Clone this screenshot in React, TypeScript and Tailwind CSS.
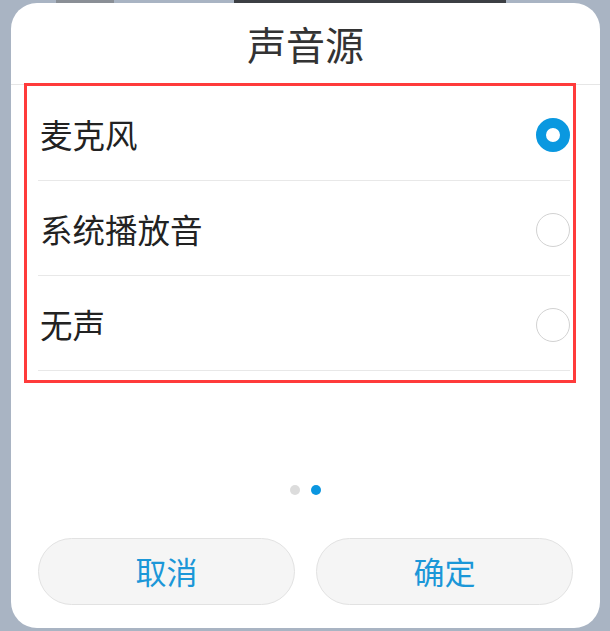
const options = [
  { label: "麦克风", checked: true },
  { label: "系统播放音", checked: false },
  { label: "无声", checked: false },
]

function Radio({ checked }: { checked: boolean }) {
  if (checked) {
    return <div className="w-[34px] h-[34px] rounded-full border-[10px] border-[#0a98e0] bg-white shrink-0" />
  }
  return <div className="w-[34px] h-[34px] rounded-full border-[1.5px] border-[#d2d2d2] bg-white shrink-0" />
}

export default function App() {
  return (
    <div
      className="w-[610px] h-[631px] bg-[#a9b4c3] overflow-hidden flex flex-col"
      style={{ fontFamily: '"Noto Sans CJK SC", "Noto Sans", sans-serif' }}
    >
      {/* bit of the screen behind the dialog */}
      <div className="h-[3px] flex">
        <div className="ml-[56px] w-[58px] bg-[#8a8f96]" />
        <div className="ml-[120px] w-[272px] bg-[#3c3f44]" />
      </div>

      <div className="ml-[11px] w-[589px] h-[625px] bg-white rounded-[26px] flex flex-col">
        <div className="h-[81px] flex items-center justify-center text-[39px] text-[#333]">
          声音源
        </div>
        <div className="h-px bg-[#e6e6e6]" />

        {/* highlighted option list */}
        <div className="-mt-[2px] ml-[13px] mr-[24px] h-[300px] border-[3px] border-[#ff3b3b] pl-[11px] pr-[3px]">
          {options.map((o) => (
            <div
              key={o.label}
              className="h-[95px] flex items-center justify-between border-b border-[#e8e8e8] pt-[3px]"
            >
              <span className="text-[32.5px] text-[#222] pl-[2px]">{o.label}</span>
              <Radio checked={o.checked} />
            </div>
          ))}
        </div>

        <div className="mt-[102px] flex justify-center gap-[11px]">
          <div className="w-[10px] h-[10px] rounded-full bg-[#dcdcdc]" />
          <div className="w-[10px] h-[10px] rounded-full bg-[#0a96e0]" />
        </div>

        <div className="mt-[43px] px-[27px] flex gap-[21px]">
          <button className="flex-1 h-[67px] rounded-full bg-[#f5f5f5] border border-[#e2e2e2] text-[31px] text-[#1b97d8]">
            取消
          </button>
          <button className="flex-1 h-[67px] rounded-full bg-[#f5f5f5] border border-[#e2e2e2] text-[31px] text-[#1b97d8]">
            确定
          </button>
        </div>
      </div>
    </div>
  )
}
